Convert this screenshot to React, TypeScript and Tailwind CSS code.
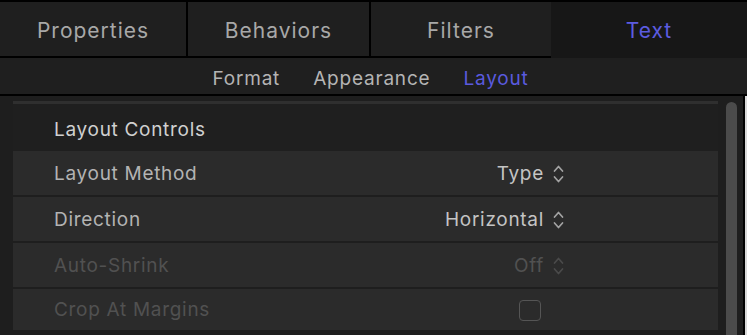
import React from "react";

const tabs = [
  { label: "Properties", w: "w-[186px]" },
  { label: "Behaviors", w: "w-[181px]" },
  { label: "Filters", w: "w-[180px]" },
];

function Chevrons({ dim }: { dim?: boolean }) {
  return (
    <svg
      width="11"
      height="22"
      viewBox="0 0 11 22"
      fill="none"
      stroke={dim ? "#4a4a4a" : "#a3a3a3"}
      strokeWidth="1.7"
      strokeLinecap="round"
      strokeLinejoin="round"
    >
      <path d="M1.5 8 L5.5 3.5 L9.5 8" />
      <path d="M1.5 14 L5.5 18.5 L9.5 14" />
    </svg>
  );
}

function Row({ label, value, dim }: { label: string; value: string; dim?: boolean }) {
  return (
    <div className="flex h-[44px] items-center bg-[#2b2b2b] pl-[41px] pr-[154px] pt-[2px]">
      <span className={`text-[19px] tracking-[0.7px] ${dim ? "text-[#515151]" : "text-[#b3b3b3]"}`}>
        {label}
      </span>
      <div className="ml-auto flex items-center">
        <span className={`text-[19px] tracking-[0.7px] ${dim ? "text-[#515151]" : "text-[#c4c4c4]"}`}>
          {value}
        </span>
        <span className="ml-[9px] flex">
          <Chevrons dim={dim} />
        </span>
      </div>
    </div>
  );
}

export default function App() {
  return (
    <div
      className="flex h-[335px] w-[747px] flex-col overflow-hidden bg-[#1e1e1e]"
      style={{ fontFamily: "Inter, 'Open Sans', sans-serif" }}
    >
      {/* top tabs */}
      <div className="flex h-[58px] border-t-2 border-black">
        {tabs.map((t, i) => (
          <React.Fragment key={t.label}>
            <div
              className={`${t.w} flex items-center justify-center border-b-2 border-black bg-[#1f1f1f] pt-[4px] text-[21px] tracking-[1px] text-[#a8a8a8]`}
            >
              {t.label}
            </div>
            {i < 2 && <div className="w-[2px] bg-black" />}
          </React.Fragment>
        ))}
        <div className="flex flex-1 items-center justify-center bg-[#171717] pt-[2px] text-[21px] tracking-[1px] text-[#5c5ce0]">
          Text
        </div>
      </div>

      {/* sub tabs */}
      <div className="flex h-[38px] items-center justify-center gap-[33px] border-b-2 border-black bg-[#1f1f1f] pr-[6px] pt-[6px] text-[19px] tracking-[0.8px]">
        <span className="text-[#b4b4b4]">Format</span>
        <span className="text-[#b4b4b4]">Appearance</span>
        <span className="text-[#5a5ade]">Layout</span>
      </div>

      {/* content */}
      <div className="flex flex-1">
        <div className="flex flex-1 pl-[13px] pt-[5px]">
          <div className="flex w-[705px] flex-col">
            <div className="h-[3px] bg-[#2f2f2f]" />
            <div className="flex h-[47px] items-center bg-[#1f1f1f] pl-[41px] pt-[5px] text-[19px] tracking-[0.7px] text-[#d0d0d0]">
              Layout Controls
            </div>
            <div className="flex flex-col gap-[2px]">
              <Row label="Layout Method" value="Type" />
              <Row label="Direction" value="Horizontal" />
              <Row label="Auto-Shrink" value="Off" dim />
              <div className="flex h-[41px] items-center bg-[#2b2b2b] pl-[41px] pr-[154px] pt-[2px]">
                <span className="text-[19px] tracking-[0.7px] text-[#515151]">Crop At Margins</span>
                <div className="ml-auto mr-[23px] h-[21px] w-[22px] rounded-[4px] border-[1.5px] border-[#555555]" />
              </div>
            </div>
          </div>
          <div className="ml-[8px] mt-[1px] w-[11px] rounded-t-full bg-[#4b4b4b]" />
        </div>
        <div className="w-[6px] bg-[#1e1e1e]" />
        <div className="w-[2px] bg-black" />
        <div className="w-[2px] bg-[#d9d9d9]" />
      </div>
    </div>
  );
}
